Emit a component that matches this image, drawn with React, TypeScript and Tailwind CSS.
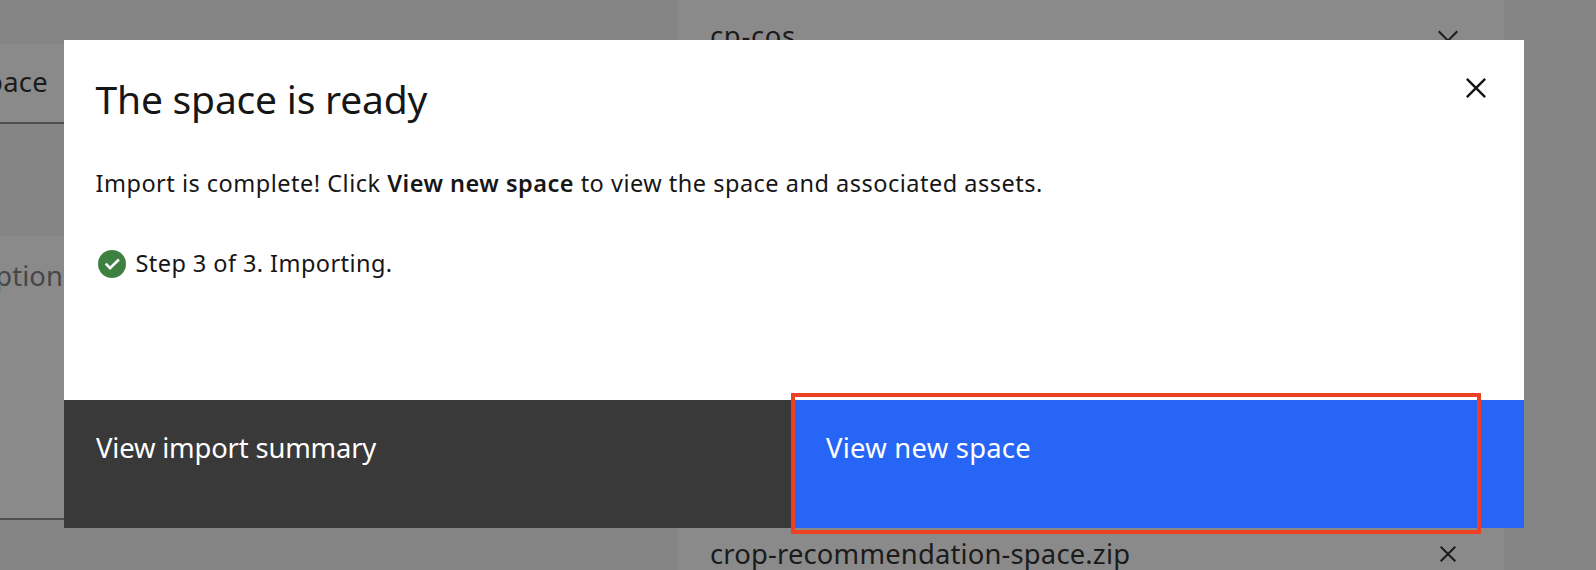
type IconProps = { className?: string };

function CloseIcon({ className }: IconProps) {
  return (
    <svg viewBox="0 0 32 32" className={className} fill="currentColor" aria-hidden="true">
      <path d="M24 9.4 22.6 8 16 14.6 9.4 8 8 9.4l6.6 6.6L8 22.6 9.4 24l6.6-6.6 6.6 6.6 1.4-1.4-6.6-6.6z" />
    </svg>
  );
}

function ChevronDown({ className }: IconProps) {
  return (
    <svg viewBox="0 0 16 16" className={className} fill="currentColor" aria-hidden="true">
      <path d="M8 11 3 6l.7-.7L8 9.6l4.3-4.3.7.7z" />
    </svg>
  );
}

function CheckmarkFilled({ className }: IconProps) {
  return (
    <svg viewBox="0 0 32 32" className={className} aria-hidden="true">
      <circle cx="16" cy="16" r="14" fill="#3e8040" />
      <path d="m9.7 15.7 4.3 4.4 8.9-8.6" fill="none" stroke="#ffffff" strokeWidth="2.6" />
    </svg>
  );
}

function PageForm() {
  return (
    <div className="flex h-full text-[27.4px] leading-9 text-[#1b1b1b]">
      <div className="flex w-[600px] flex-col">
        <div className="mt-11 h-20 border-b-2 border-[#4f4f4f] bg-[#8a8a8a] pt-5">
          <div className="flex w-12 justify-end overflow-hidden whitespace-nowrap tracking-[0.3px]">
            <span>space</span>
          </div>
        </div>
        <div className="mt-28 h-[284px] border-b-2 border-[#4f4f4f] bg-[#8a8a8a] pt-[22px] text-[#474747]">
          <div className="flex w-[63px] justify-end overflow-hidden whitespace-nowrap tracking-[0.1px]">
            <span>description</span>
          </div>
        </div>
      </div>
      <div className="ml-[78px] flex w-[826px] flex-col justify-between bg-[#8a8a8a] pl-8 pr-10">
        <div className="flex items-start justify-between pt-[18px]">
          <span className="tracking-[0.7px]">cp-cos</span>
          <ChevronDown className="mt-[2px] size-8" />
        </div>
        <div className="flex h-[34px] items-start justify-between">
          <span className="tracking-[0.17px]">crop-recommendation-space.zip</span>
          <CloseIcon className="mt-[2px] size-8 shrink-0" />
        </div>
      </div>
    </div>
  );
}

function SpaceReadyDialog() {
  return (
    <div
      role="dialog"
      className="absolute left-16 top-10 flex h-[488px] w-[1460px] flex-col bg-white text-[#161616]"
    >
      <div className="flex flex-1 justify-between pl-[31.5px] pr-7">
        <div className="pt-[35px]">
          <h1 className="text-[39px] leading-[48px] tracking-[-0.2px]">The space is ready</h1>
          <p className="mt-[42px] whitespace-nowrap text-[23.5px] leading-9 tracking-[0.5px]">
            Import is complete! Click <strong className="font-semibold">View new space</strong> to view the
            space and associated assets.
          </p>
          <div className="mt-11 flex h-9 items-center text-[23.5px] leading-9 tracking-[0.43px]">
            <CheckmarkFilled className="mb-[-2px] ml-[0.5px] mr-[7.5px] size-8" />
            <span>Step 3 of 3. Importing.</span>
          </div>
        </div>
        <button aria-label="Close" className="mt-7 size-10">
          <CloseIcon className="size-10" />
        </button>
      </div>
      <div className="relative grid h-32 grid-cols-2 text-[27.4px] leading-9 text-white">
        <button className="flex items-start bg-[#393939] pl-8 pt-[30px] tracking-[-0.17px]">
          View import summary
        </button>
        <button className="flex items-start bg-[#2765f6] pl-8 pt-[30px] tracking-[0.25px]">
          View new space
        </button>
        <div className="pointer-events-none absolute left-[727px] top-[-7px] h-[141px] w-[690px] border-4 border-[#ee4023]" />
      </div>
    </div>
  );
}

export default function App() {
  return (
    <div className="relative h-[570px] w-[1596px] overflow-hidden bg-[#858585] font-['Noto_Sans',sans-serif]">
      <PageForm />
      <SpaceReadyDialog />
    </div>
  );
}
